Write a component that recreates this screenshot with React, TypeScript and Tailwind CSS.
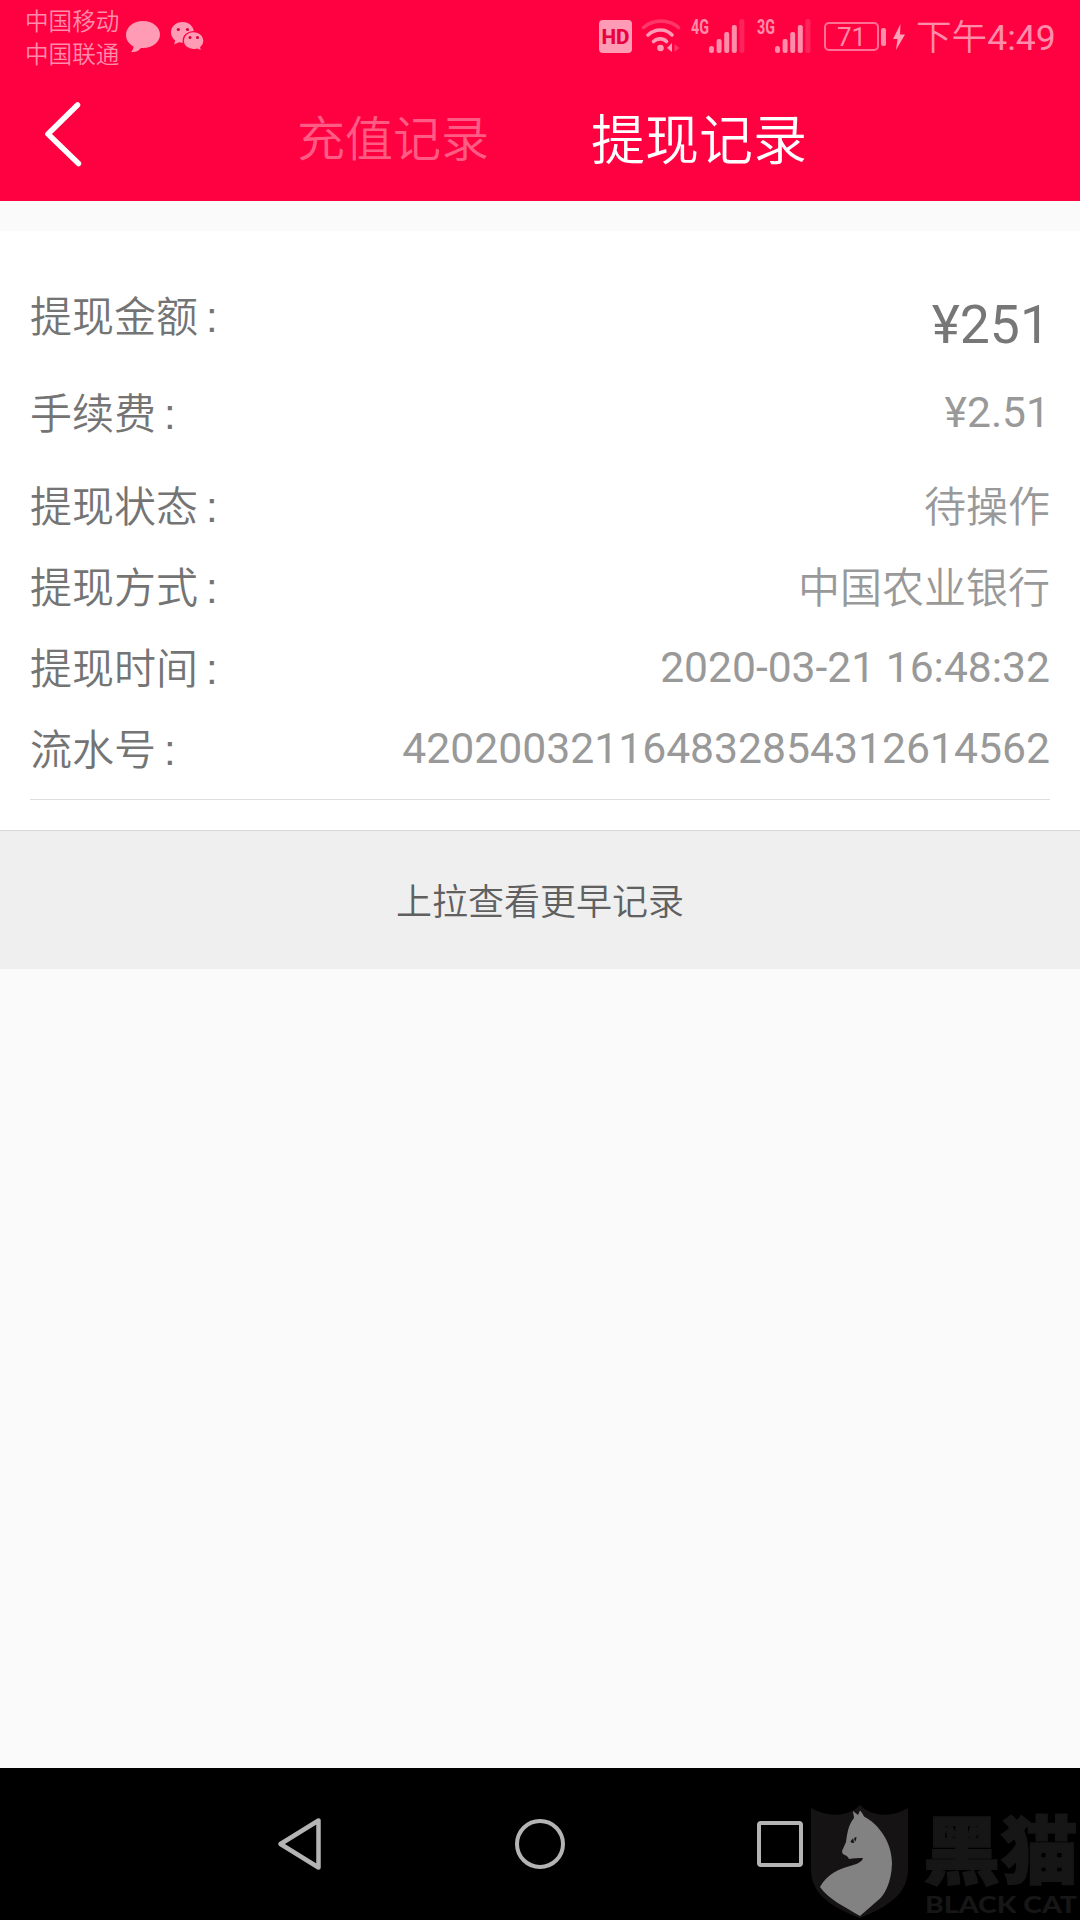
import type { ReactNode } from 'react'

interface RecordField {
   label: string
   value: string
   rowClass: string
   valueClass: string
}

const FIELDS: RecordField[] = [
   {
      label: '提现金额',
      value: '¥251',
      rowClass: 'h-[97px]',
      valueClass: 'text-[53.5px] text-[#777777] pt-[7px]',
   },
   {
      label: '手续费',
      value: '¥2.51',
      rowClass: 'h-[93px]',
      valueClass: 'text-[42.6px] text-[#999999] -mt-[3px]',
   },
   {
      label: '提现状态',
      value: '待操作',
      rowClass: 'h-[81px]',
      valueClass: 'text-[42px] text-[#999999] font-[350]',
   },
   {
      label: '提现方式',
      value: '中国农业银行',
      rowClass: 'h-[81px]',
      valueClass: 'text-[42px] text-[#999999] font-[350]',
   },
   {
      label: '提现时间',
      value: '2020-03-21 16:48:32',
      rowClass: 'h-[81px]',
      valueClass: 'text-[42.6px] text-[#999999] -mt-[3px]',
   },
   {
      label: '流水号',
      value: '420200321164832854312614562',
      rowClass: 'h-[81px]',
      valueClass: 'text-[42.7px] text-[#999999] -mt-[3px]',
   },
]

const SignalIcon = ({ label }: { label: string }) => (
   <svg width="54" height="38" viewBox="0 -2 54 38" fill="#ff8cab" overflow="visible">
      <text
         x="0"
         y="16"
         fontFamily="Roboto, sans-serif"
         fontWeight="700"
         fontSize="20.500"
         textLength="18"
         lengthAdjust="spacingAndGlyphs"
      >
         {label}
      </text>
      <rect x="18" y="28" width="5" height="7" rx="2.5" />
      <rect x="25.6" y="21" width="5" height="14" rx="2" />
      <rect x="33.2" y="14" width="5" height="21" rx="2" />
      <rect x="40.8" y="7" width="5" height="28" rx="2" />
      <rect x="48.4" y="1" width="5" height="34" rx="2" opacity="0.25" />
   </svg>
)

const StatusBar = () => (
   <div className="flex h-[74px] items-start pl-[25px] text-[#ff8cab]">
      <div className="w-[96px] pt-[6px] text-[23.6px] leading-[33px] font-[350] whitespace-nowrap">
         <p>中国移动</p>
         <p>中国联通</p>
      </div>

      <svg className="mt-[20px] ml-[4px]" width="36" height="34" viewBox="0 0 36 34">
         <path
            d="M18 1C8.500 1 1 7 1 15c0 5 3 9 7.500 11.500 0 2-1 4-2.500 5.500 5 .5 8-1.500 10-4 .7.100 1.300.100 2 .100 9.500 0 17-6 17-13.500S27.500 1 18 1z"
            fill="#ff9bb5"
         />
      </svg>

      <svg className="mt-[21px] ml-[9px]" width="36" height="32" viewBox="0 0 36 32">
         <path
            d="M12.500 1C6 1 1 5.500 1 11.500c0 3.300 1.700 6.200 4.300 8L4 23.500l5-2.300c1.200.3 2.300.5 3.500.5 6.500 0 11.500-4.500 11.500-10.200S19 1 12.500 1z"
            fill="#ff9bb5"
         />
         <path
            d="M23.500 10.700c-5.700 0-10.300 4-10.300 9s4.600 9 10.300 9c1.300 0 2.500-.2 3.600-.6l4.600 2-1-3.700c2-1.700 3.300-4 3.300-6.700 0-5-4.700-9-10.500-9z"
            fill="#ff9bb5"
            stroke="#ff0040"
            strokeWidth="1.200"
         />
         <g fill="#d8003c">
            <circle cx="8.300" cy="8.500" r="1.600" />
            <circle cx="17.500" cy="8.500" r="1.600" />
            <circle cx="20" cy="16.500" r="1.500" />
            <circle cx="27.500" cy="16.500" r="1.500" />
         </g>
      </svg>

      <svg className="mt-[20px] ml-[393px]" width="33" height="33" viewBox="0 0 33 33">
         <rect width="33" height="33" rx="4" fill="#ff9bb5" />
         <text
            x="2.500"
            y="24"
            fontFamily="Roboto, sans-serif"
            fontWeight="800"
            fontSize="21"
            fill="#e8003f"
            textLength="28"
            lengthAdjust="spacingAndGlyphs"
         >
            HD
         </text>
      </svg>

      {/* wifi with the data activity arrow */}
      <svg className="mt-[18px] ml-[9px]" width="40" height="36" viewBox="0 0 40 36" fill="none">
         <g stroke="#ff9bb5" strokeWidth="3.600" strokeLinecap="round">
            <path d="M2.500 9.500C12 1 28 1 37.500 9.500" opacity="0.35" />
            <path d="M7 17C14 10.300 25 10.300 31 17" />
            <path d="M12.500 23.500c3.700-3.500 9.800-3.500 13 0" />
         </g>
         <circle cx="19.500" cy="30" r="3.300" fill="#ff9bb5" />
         <path d="M26 30l5-5v9z" fill="#ff9bb5" />
         <path d="M33.500 26l5 4-5 4z" fill="#ff9bb5" opacity="0.35" />
      </svg>

      <div className="mt-[16px] ml-[10px] flex gap-[12px]">
         <SignalIcon label="4G" />
         <SignalIcon label="3G" />
      </div>

      <div className="mt-[22px] ml-[13px] flex items-center">
         <div className="flex h-[29px] w-[55px] items-center justify-center rounded-[5px] border-2 border-[#ff7096] font-[Roboto] text-[26px] leading-none">
            71
         </div>
         <div className="ml-[2px] h-[18px] w-[5px] rounded-[2px] bg-[#ff8cab]" />
         <svg className="ml-[6px]" width="14" height="28" viewBox="0 0 14 28">
            <path d="M8.500 1L1 16h4.500L4 27l9-15.500H8z" fill="#ffa0b8" />
         </svg>
      </div>

      <span className="mt-[14px] ml-[10px] text-[35.600px] leading-[48px] font-[350] whitespace-nowrap">
         下午<span className="font-normal">4:49</span>
      </span>
   </div>
)

const Watermark = () => (
   <div className="absolute top-[36px] left-[811px] flex">
      <svg width="98" height="116" viewBox="0 0 98 116">
         <path
            d="M0 4c16 9 36 10 49-3 13 13 33 12 48 3v61c0 24-18 37-48 49C18 102 0 89 0 65z"
            fill="#151314"
         />
         <path
            d="M43 14c0-2-1-5-1-7l5 4 2-4.500c2 2 3 4 4 6 14 7 28 25 28 47-.5 20-8 31-12 35L49 112C34 103 17 95 9 83c7-13 19-18 30-21 7-2 12-4 13-8-5 0-9 0-14 1-2-5-7-3-7-8l4-9c1-7 2-17 8-24z"
            fill="#828282"
         />
         <path d="M39.500 38c1-3 3-4 6-5-.2 4-2 6-4 6z" fill="#151314" />
         <path d="M42.500 33.500l1 5" stroke="#828282" strokeWidth="1" />
      </svg>
      <svg width="171" height="116" viewBox="0 0 171 116" fill="#161616" overflow="visible">
         <text
            x="14"
            y="74"
            fontFamily="'Noto Sans CJK SC', sans-serif"
            fontWeight="900"
            fontSize="74"
            textLength="155"
            lengthAdjust="spacingAndGlyphs"
            stroke="#161616"
            strokeWidth="1.500"
         >
            黑猫
         </text>
         <text
            x="16"
            y="109"
            fontFamily="Lato, sans-serif"
            fontWeight="900"
            fontSize="23"
            textLength="152"
            lengthAdjust="spacingAndGlyphs"
         >
            BLACK CAT
         </text>
      </svg>
   </div>
)

const NavBar = () => (
   <div className="relative flex h-[152px] items-center bg-black">
      <svg className="ml-[277px]" width="46" height="54" viewBox="0 0 46 54" fill="none">
         <path
            d="M41.500 3.500v47L3.500 27z"
            stroke="#b4b4b4"
            strokeWidth="4.500"
            strokeLinejoin="round"
         />
      </svg>
      <div className="ml-[192px] size-[50px] rounded-full border-[4.500px] border-[#b4b4b4]" />
      <div className="ml-[192px] h-[46px] w-[46px] rounded-[4px] border-[4.500px] border-[#b4b4b4]" />
      <Watermark />
   </div>
)

const Header = ({ children }: { children: ReactNode }) => (
   <header className="h-[201px] bg-[#ff0040]">
      {children}
      <div className="flex h-[127px] items-start">
         <svg className="mt-[26px] ml-[43px]" width="40" height="68" viewBox="0 0 40 68" fill="none">
            <path
               d="M34.500 5L5 34l30.500 29.500"
               stroke="#ffffff"
               strokeWidth="5.500"
               strokeLinecap="round"
               strokeLinejoin="round"
            />
         </svg>
         <span className="mt-[31px] ml-[214px] text-[48px] leading-[70px] font-[350] text-[#ff5c85]">
            充值记录
         </span>
         <span className="mt-[30px] ml-[102px] text-[54px] leading-[76px] font-[350] text-white">
            提现记录
         </span>
      </div>
   </header>
)

export default function App() {
   return (
      <div className="flex h-[1920px] w-[1080px] flex-col overflow-hidden bg-[#fafafa] font-[Roboto,'Noto_Sans_CJK_SC',sans-serif]">
         <Header>
            <StatusBar />
         </Header>

         <main className="mt-[30px] flex-1">
            <section className="h-[599px] bg-white px-[30px] pt-[39px]">
               <div className="border-b border-[#dddddd] pb-[15px]">
                  {FIELDS.map((field) => (
                     <div
                        key={field.label}
                        className={`flex items-start justify-between leading-[96px] whitespace-nowrap ${field.rowClass}`}
                     >
                        <span className="text-[42px] font-[350] text-[#747474]">
                           {field.label}
                           <span className="ml-[8px] font-['Liberation_Sans']">:</span>
                        </span>
                        <span className={field.valueClass}>{field.value}</span>
                     </div>
                  ))}
               </div>
            </section>
            <div className="flex h-[139px] items-center justify-center border-t border-[#d8d8d8] bg-[#efefef] pt-[6px] text-[36px] font-[350] text-[#606060]">
               上拉查看更早记录
            </div>
         </main>

         <NavBar />
      </div>
   )
}
